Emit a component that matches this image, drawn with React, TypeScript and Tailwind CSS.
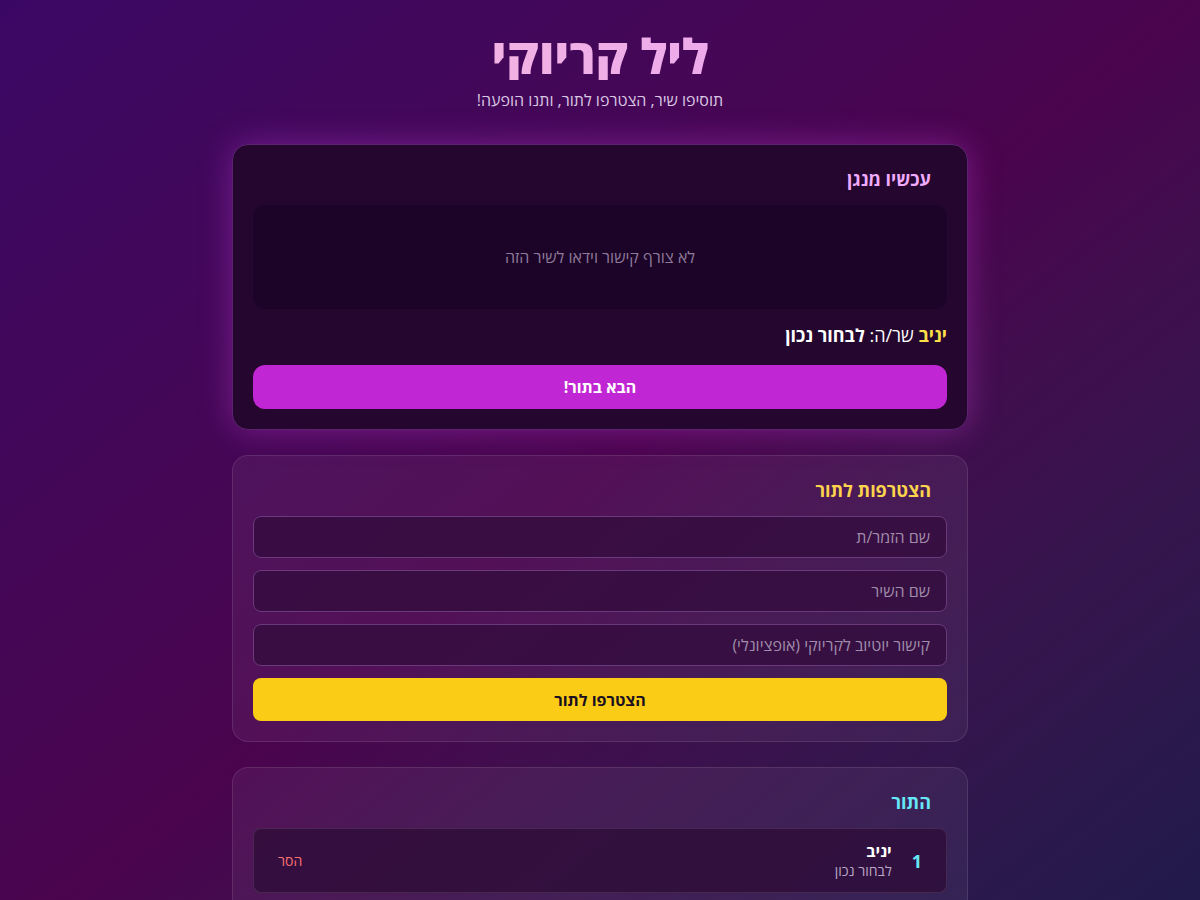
import React from "react";

export default function App() {
  return (
    <div
      dir="rtl"
      className="min-h-[900px] w-full bg-gradient-to-br from-[#3b0764] via-[#4a044e] to-[#1e1b4b] text-white"
      style={{ fontFamily: '"Open Sans", "Liberation Sans", sans-serif' }}
    >
      <div className="mx-auto w-[736px] pt-8 pb-10">
        <header className="text-center">
          <h1 className="text-5xl leading-none font-extrabold bg-gradient-to-l from-[#e9a0f5] to-[#f7bcd8] bg-clip-text text-transparent">
            ליל קריוקי
          </h1>
          <p className="mt-2 text-base leading-6 text-[#d9c6e3]">תוסיפו שיר, הצטרפו לתור, ותנו הופעה!</p>
        </header>

        <section className="mt-8 rounded-2xl border border-[#5c2470] bg-[#25062f] p-5 shadow-[0_0_32px_rgba(217,70,239,0.35)]">
          <h2 className="px-4 text-lg leading-7 font-bold text-[#f0abfc]">עכשיו מנגן</h2>
          <div className="mt-3 flex h-[104px] items-center justify-center rounded-xl bg-[#1c0328] text-base text-[#8e7a99]">
            לא צורף קישור וידאו לשיר הזה
          </div>
          <p className="mt-3 text-lg leading-7">
            <span className="font-bold text-[#fde047]">יניב</span> שר/ה: <span className="font-bold">לבחור נכון</span>
          </p>
          <button className="mt-4 h-11 w-full rounded-xl bg-[#c026d3] text-base font-bold text-white">הבא בתור!</button>
        </section>

        <section className="mt-[25px] rounded-2xl border border-white/10 bg-white/5 p-5">
          <h2 className="px-4 text-lg leading-7 font-bold text-[#fcd34d]">הצטרפות לתור</h2>
          <div className="mt-3 flex flex-col gap-3">
            <input
              className="h-[42px] w-full rounded-lg border border-[#6a3a7c] bg-[#330c3d]/80 px-4 text-base text-white placeholder-[#a08cab] outline-none"
              placeholder="שם הזמר/ת"
            />
            <input
              className="h-[42px] w-full rounded-lg border border-[#6a3a7c] bg-[#330c3d]/80 px-4 text-base text-white placeholder-[#a08cab] outline-none"
              placeholder="שם השיר"
            />
            <input
              className="h-[42px] w-full rounded-lg border border-[#6a3a7c] bg-[#330c3d]/80 px-4 text-base text-white placeholder-[#a08cab] outline-none"
              placeholder="קישור יוטיוב לקריוקי (אופציונלי)"
            />
            <button className="h-[43px] w-full rounded-lg bg-[#facc15] text-base font-bold text-[#1a1020]">הצטרפו לתור</button>
          </div>
        </section>

        <section className="mt-[25px] rounded-2xl border border-white/10 bg-white/5 p-5">
          <h2 className="px-4 text-lg leading-7 font-bold text-[#67e8f9]">התור</h2>
          <div className="mt-3 flex flex-col gap-3">
            <div className="flex h-[65px] items-center gap-5 rounded-lg border border-white/10 bg-[#2e0c38]/80 px-6">
              <span className="text-lg font-bold text-[#67e8f9]">1</span>
              <div className="flex flex-1 flex-col">
                <span className="text-base leading-5 font-bold text-white">יניב</span>
                <span className="text-sm leading-5 text-[#b9a6c6]">לבחור נכון</span>
              </div>
              <button className="text-sm text-[#f87171]">הסר</button>
            </div>
          </div>
        </section>
      </div>
    </div>
  );
}
